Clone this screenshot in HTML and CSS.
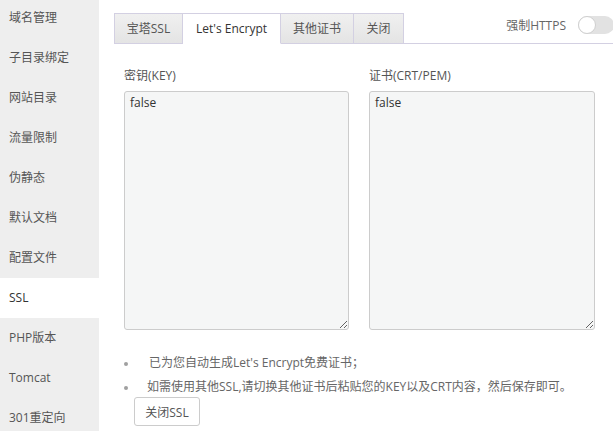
FILE: index.html
```html
<!DOCTYPE html>
<html>
<head>
<meta charset="utf-8">
<link rel="stylesheet" href="styles.css">
</head>
<body>
<div class="page">
  <ul class="side">
    <li>域名管理</li>
    <li>子目录绑定</li>
    <li>网站目录</li>
    <li>流量限制</li>
    <li>伪静态</li>
    <li>默认文档</li>
    <li>配置文件</li>
    <li class="on">SSL</li>
    <li>PHP版本</li>
    <li>Tomcat</li>
    <li>301重定向</li>
  </ul>
  <div class="main">
    <div class="tabbar">
      <span class="tab t1">宝塔SSL</span>
      <span class="tab t2 active">Let's Encrypt</span>
      <span class="tab t3">其他证书</span>
      <span class="tab t4">关闭</span>
      <div class="force">
        <span class="force-label">强制HTTPS</span>
        <span class="switch"><span class="knob"></span></span>
      </div>
    </div>
    <div class="fields">
      <div class="field f1">
        <div class="label">密钥(KEY)</div>
        <textarea class="box">false</textarea>
      </div>
      <div class="field f2">
        <div class="label">证书(CRT/PEM)</div>
        <textarea class="box">false</textarea>
      </div>
    </div>
    <ul class="tips">
      <li class="first">已为您自动生成Let's Encrypt免费证书；</li>
      <li>如需使用其他SSL,请切换其他证书后粘贴您的KEY以及CRT内容，然后保存即可。</li>
    </ul>
    <button class="btn">关闭SSL</button>
  </div>
</div>
</body>
</html>
```

FILE: styles.css
```css
html, body {
  margin: 0;
  padding: 0;
  background: #fff;
  overflow: hidden;
}
body {
  width: 613px;
  height: 431px;
  font-family: "Open Sans", "Noto Sans CJK SC", sans-serif;
  font-size: 12px;
  color: #555;
}
.page {
  display: flex;
  height: 431px;
}
.side {
  list-style: none;
  margin: -2px 0 0 0;
  padding: 0;
  width: 99px;
  flex: none;
  background: #eeeeee;
  height: 440px;
}
.side li {
  height: 40px;
  line-height: 40px;
  padding-left: 9px;
  color: #555;
  white-space: nowrap;
}
.side li.on {
  background: #fff;
  color: #333;
}
.main {
  flex: 1;
  padding-left: 15px;
  min-width: 0;
}
.tabbar {
  margin-top: 13px;
  height: 30px;
  border-bottom: 1px solid #d3d0e2;
  display: flex;
  align-items: stretch;
}
.tab {
  box-sizing: border-box;
  height: 31px;
  line-height: 30px;
  text-align: center;
  border: 1px solid #d3d0e2;
  border-left: none;
  background: linear-gradient(#f0f0f0, #e4e4e4);
  color: #555;
  font-size: 12px;
}
.t1 { width: 69px; border-left: 1px solid #d3d0e2; }
.t2 { width: 98px; }
.t3 { width: 73px; }
.t4 { width: 50px; }
.tab.active {
  background: #fff;
  border-bottom-color: #fff;
  color: #333;
}
.force {
  margin-left: auto;
  display: flex;
  align-items: center;
  height: 24px;
}
.force-label {
  color: #666;
  margin-right: 12px;
}
.switch {
  width: 36px;
  height: 18px;
  border-radius: 9px;
  background: #e2e2e2;
  position: relative;
  margin-right: -1px;
}
.knob {
  position: absolute;
  left: 0;
  top: 0;
  width: 16px;
  height: 16px;
  border-radius: 50%;
  background: #fff;
  border: 1px solid #cfcfcf;
}
.fields {
  display: flex;
  gap: 20px;
  padding-left: 10px;
  margin-top: 24px;
}
.field {
  display: flex;
  flex-direction: column;
}
.f1 { width: 225px; }
.f2 { width: 226px; }
.label {
  height: 16px;
  line-height: 16px;
  color: #555;
  margin-bottom: 7px;
}
.box {
  box-sizing: border-box;
  width: 100%;
  height: 239px;
  border: 1px solid #cccccc;
  border-radius: 3px;
  background: #f5f6f6;
  font-family: "Open Sans", "Noto Sans CJK SC", sans-serif;
  font-size: 12px;
  color: #333;
  padding: 2px 5px;
  margin: 0;
  resize: vertical;
  outline: none;
}
.tips {
  margin: 24px 0 0 0;
  padding: 0 0 0 10px;
  color: #666;
  list-style: none;
}
.tips li {
  height: 24px;
  line-height: 18px;
  white-space: nowrap;
  display: flex;
}
.tips li::before {
  content: "";
  width: 4px;
  height: 4px;
  border-radius: 50%;
  background: #a0a0a0;
  flex: none;
  margin-top: 8px;
  margin-right: 19px;
}
.tips li.first::before {
  margin-right: 21px;
}
.btn {
  margin-left: 20px;
  margin-top: -5px;
  height: 29px;
  width: 66px;
  border: 1px solid #ccc;
  border-radius: 3px;
  background: #fff;
  font-family: "Open Sans", "Noto Sans CJK SC", sans-serif;
  font-size: 12px;
  color: #555;
  padding: 0;
}
```
